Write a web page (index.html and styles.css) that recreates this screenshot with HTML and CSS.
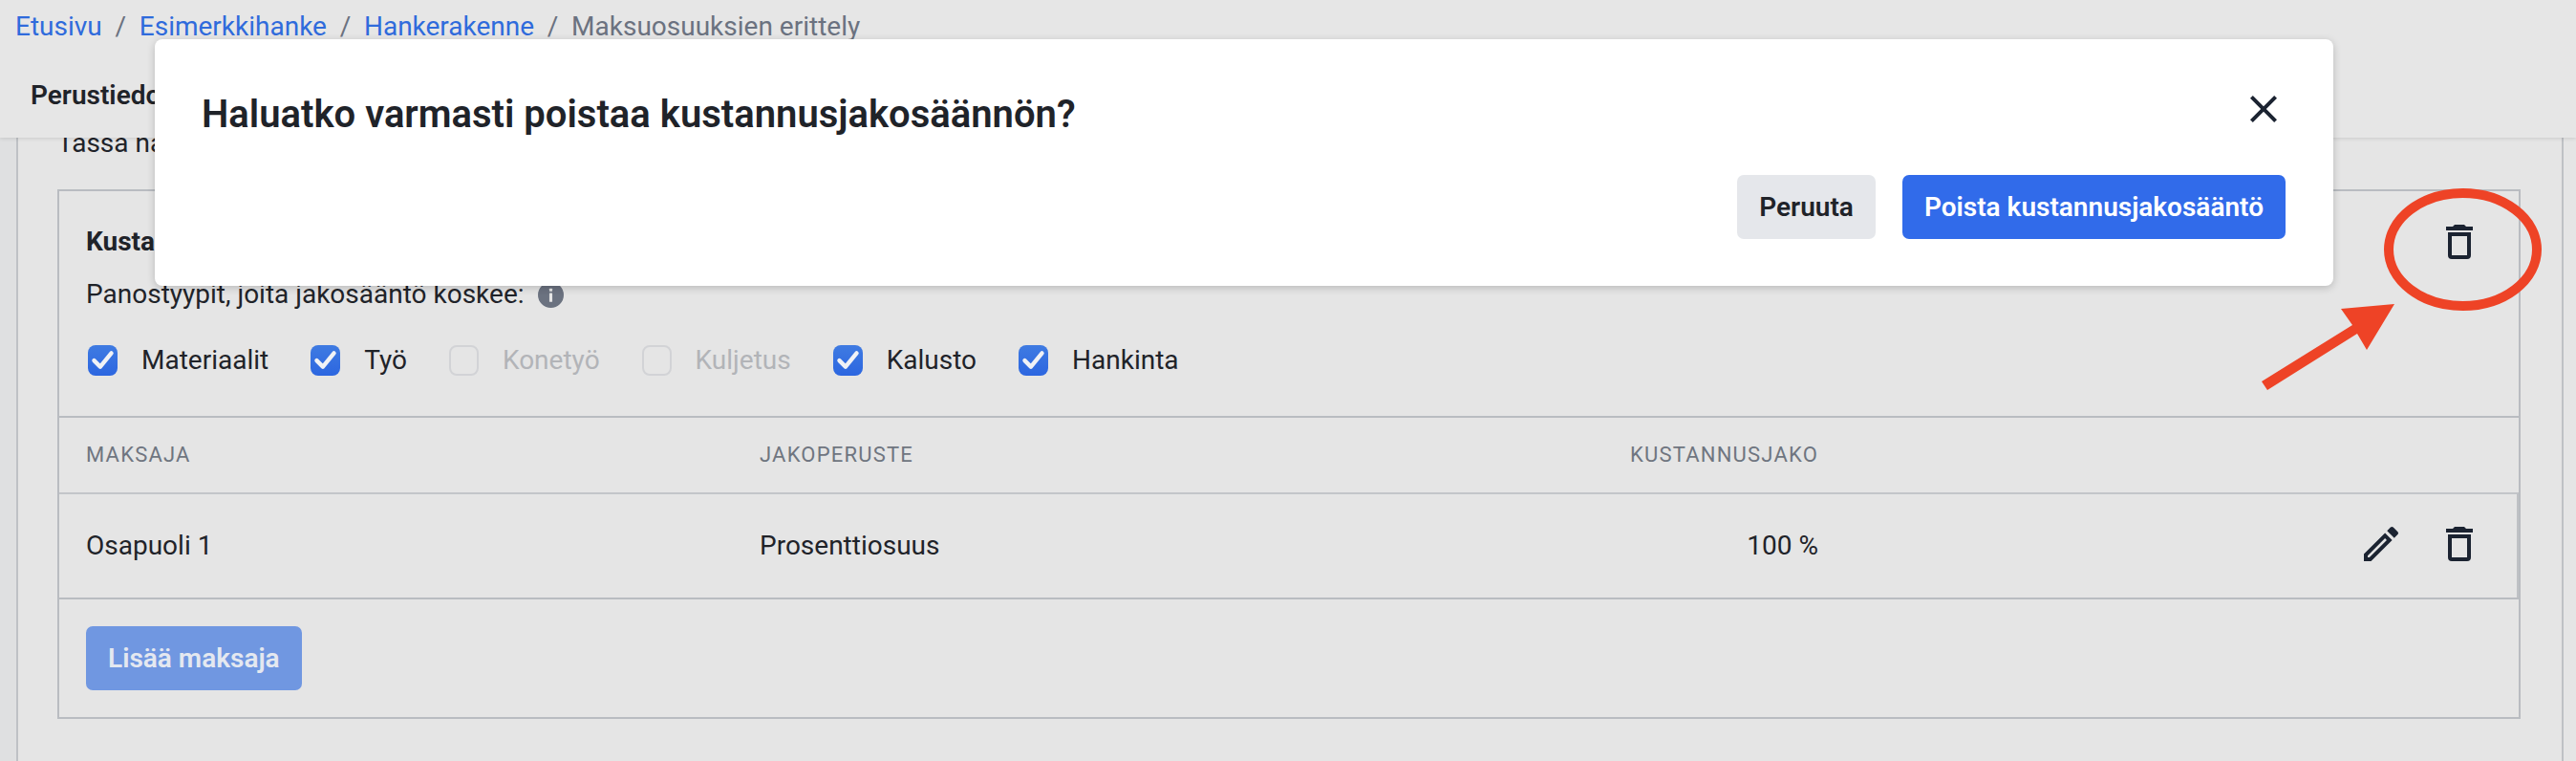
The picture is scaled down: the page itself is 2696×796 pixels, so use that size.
FILE: index.html
```html
<!DOCTYPE html>
<html lang="fi">
<head>
<meta charset="utf-8">
<title>Maksuosuuksien erittely</title>
<link rel="stylesheet" href="styles.css">
</head>
<body>
<header class="top">
  <nav class="crumbs">
    <a class="link">Etusivu</a><span class="sep">/</span>
    <a class="link">Esimerkkihanke</a><span class="sep">/</span>
    <a class="link">Hankerakenne</a><span class="sep">/</span>
    <span class="current">Maksuosuuksien erittely</span>
  </nav>
  <div class="tabs"><span class="tab">Perustiedot</span></div>
</header>
<main class="panel">
  <p class="intro">Tässä näkymässä</p>
  <section class="card">
    <div class="card-head">
      <strong class="card-title">Kustannusjakosääntö</strong>
      <svg class="icon" viewBox="0 0 24 24"><path d="M6 19a2 2 0 0 0 2 2h8a2 2 0 0 0 2-2V7H6v12zM8 9h8v10H8V9zm7.5-5l-1-1h-5l-1 1H5v2h14V4h-3.5z"/></svg>
    </div>
    <div class="types">
      <span>Panostyypit, joita jakosääntö koskee:</span>
      <svg class="info" viewBox="0 0 26 26"><circle cx="13" cy="13" r="13"/><rect class="info-i" x="11.5" y="11" width="3" height="9" rx=".5"/><rect class="info-i" x="11.5" y="6.5" width="3" height="3" rx=".5"/></svg>
    </div>
    <div class="checks">
      <label class="check"><span class="box on"><svg viewBox="0 0 24 24"><path d="M5 12.5l5 5L19 6.5"/></svg></span>Materiaalit</label>
      <label class="check"><span class="box on"><svg viewBox="0 0 24 24"><path d="M5 12.5l5 5L19 6.5"/></svg></span>Työ</label>
      <label class="check off"><span class="box"></span>Konetyö</label>
      <label class="check off"><span class="box"></span>Kuljetus</label>
      <label class="check"><span class="box on"><svg viewBox="0 0 24 24"><path d="M5 12.5l5 5L19 6.5"/></svg></span>Kalusto</label>
      <label class="check"><span class="box on"><svg viewBox="0 0 24 24"><path d="M5 12.5l5 5L19 6.5"/></svg></span>Hankinta</label>
    </div>
    <div class="row row-head">
      <span>Maksaja</span><span>Jakoperuste</span><span class="num">Kustannusjako</span><span></span>
    </div>
    <div class="row row-body">
      <span>Osapuoli 1</span><span>Prosenttiosuus</span><span class="num">100 %</span>
      <span class="actions">
        <svg class="icon pen" viewBox="0 0 24 24"><path d="M14.06 9.02l.92.92L5.92 19H5v-.92l9.06-9.06M17.66 3c-.25 0-.51.1-.7.29l-1.83 1.83 3.75 3.75 1.83-1.83c.39-.39.39-1.02 0-1.41l-2.34-2.34c-.2-.2-.45-.29-.71-.29zm-3.6 3.19L3 17.25V21h3.75L17.81 9.94l-3.75-3.75z"/></svg>
        <svg class="icon" viewBox="0 0 24 24"><path d="M6 19a2 2 0 0 0 2 2h8a2 2 0 0 0 2-2V7H6v12zM8 9h8v10H8V9zm7.5-5l-1-1h-5l-1 1H5v2h14V4h-3.5z"/></svg>
      </span>
    </div>
    <div class="card-foot"><button class="btn primary faded">Lisää maksaja</button></div>
  </section>
</main>
<div class="modal">
  <div class="modal-head">
    <h2 class="modal-title">Haluatko varmasti poistaa kustannusjakosäännön?</h2>
    <svg class="icon close" viewBox="0 0 24 24"><path d="M19 6.41L17.59 5 12 10.59 6.41 5 5 6.41 10.59 12 5 17.59 6.41 19 12 13.41 17.59 19 19 17.59 13.41 12 19 6.41z"/></svg>
  </div>
  <div class="modal-foot">
    <button class="btn neutral">Peruuta</button>
    <button class="btn primary">Poista kustannusjakosääntö</button>
  </div>
</div>
<svg class="marks" viewBox="0 0 2696 796">
  <ellipse class="ring" cx="2577.5" cy="261" rx="77.5" ry="59"/>
  <polygon class="arrow" points="2506,318 2450,323 2462,340 2367,399 2373,408 2467,349 2477,366"/>
</svg>
</body>
</html>
```
FILE: styles.css
```css
* { box-sizing: border-box; }
html, body { margin: 0; height: 796px; overflow: hidden; }
body {
  position: relative;
  width: 2696px;
  padding-left: 17px;
  background: linear-gradient(90deg, #dfe0e1 17px, #e5e5e5 17px);
  font-family: Roboto, "Liberation Sans", sans-serif;
  font-size: 28px;
  line-height: 40px;
  color: #1f2329;
}
.top {
  position: relative;
  z-index: 1;
  height: 144px;
  margin-left: -17px;
  background: #e6e6e6;
  box-shadow: 0 1px 4px rgba(0,0,0,.12);
}
.crumbs { display: flex; height: 56px; padding: 8px 0 0 16px; color: #6b7280; }
.link { color: #2f6bdc; }
.sep { width: 39px; text-align: center; color: #6b7280; }
.tabs { display: flex; height: 88px; padding-left: 32px; align-items: center; }
.tab { font-weight: 600; }

.panel {
  width: 2666px;
  height: 666px;
  margin-top: -14px;
  padding-left: 41px;
  border-left: 2px solid #bfc1c5;
  border-right: 2px solid #bfc1c5;
}
.intro { margin: 0 0 28px; }
.card {
  width: 2578px;
  border: 2px solid #b9bcc1;
}
.card-head {
  display: flex;
  justify-content: space-between;
  align-items: center;
  height: 40px;
  margin-top: 33px;
  padding: 0 38px 0 28px;
}
.card-title { font-weight: 700; }
.icon { width: 48px; height: 48px; fill: #1b2331; flex: none; }
.types { display: flex; align-items: center; gap: 14px; margin-top: 15px; padding-left: 28px; }
.info { width: 27px; height: 27px; fill: #6b7280; }
.info-i { fill: #e5e5e5; }
.checks { display: flex; gap: 44px; margin-top: 29px; padding: 0 0 38px 30px; }
.check { display: flex; align-items: center; gap: 25px; }
.check.off { color: #b2b4b8; }
.box {
  width: 31px;
  height: 32px;
  border-radius: 8px;
  border: 2px solid #d2d3d6;
}
.box.on { border: 0; background: linear-gradient(#3f7be2, #2c66e0); }
.box svg { display: block; fill: none; stroke: #f0f2f6; stroke-width: 3.4; stroke-linecap: round; stroke-linejoin: round; }
.row {
  display: grid;
  grid-template-columns: 705px 600px 508px 1fr;
  align-items: center;
  padding: 0 38px 0 28px;
  border-top: 2px solid #b9bcc1;
}
.row-head {
  height: 80px;
  font-size: 22px;
  letter-spacing: 1.2px;
  text-transform: uppercase;
  color: #6f7580;
}
.row-body { height: 110px; border-top-color: #c3c5c9; border-right: 2px solid #bfc1c5; padding-right: 36px; }
.num { text-align: right; }
.actions { display: flex; justify-content: flex-end; gap: 34px; }
.pen { margin-bottom: 4px; }
.card-foot { padding: 28px 28px; border-top: 2px solid #b9bcc1; }
.btn {
  height: 67px;
  padding: 0 23px;
  border: 0;
  border-radius: 7px;
  font: 600 28px/40px Roboto, "Liberation Sans", sans-serif;
}
.primary { background: #316bea; color: #fff; }
.faded { background: #7097e1; color: #e4e8f0; display: block; }
.neutral { background: #e5e7eb; color: #1f2329; }

.modal {
  position: absolute;
  z-index: 2;
  left: 162px;
  top: 41px;
  width: 2280px;
  height: 258px;
  padding: 49px 50px 49px;
  display: flex;
  flex-direction: column;
  justify-content: space-between;
  border-radius: 8px;
  background: #fff;
  box-shadow: 0 2px 8px rgba(0,0,0,.2);
}
.modal-head { display: flex; justify-content: space-between; align-items: flex-start; }
.modal-title { margin: 0 0 0 -1px; font-size: 40px; line-height: 60px; font-weight: 600; }
.close { margin-right: -1px; }
.modal-foot { display: flex; justify-content: flex-end; gap: 28px; }

.marks { position: absolute; z-index: 3; left: 0; top: 0; width: 2696px; height: 796px; pointer-events: none; }
.ring { fill: none; stroke: #ee4326; stroke-width: 10; }
.arrow { fill: #ee4326; }
```
